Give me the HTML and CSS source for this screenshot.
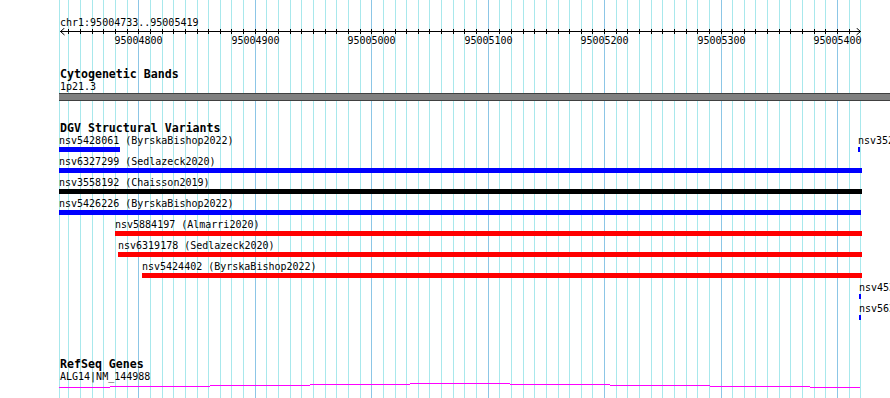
FILE: index.html
```html
<!DOCTYPE html>
<html lang="en">
<head>
    <meta charset="UTF-8">
    <title>chr1:95004733..95005419</title>
    <link rel="stylesheet" href="styles.css">
</head>
<body>

<div class="view">
    <!--背景网格-->
    <svg class="grid" id="grid" width="890" height="398"></svg>

    <!--标尺-->
    <div class="ruler">
        <div class="loc">chr1:95004733..95005419</div>
        <svg class="scale" id="scale" width="890" height="20"></svg>
    </div>

    <!--细胞遗传带-->
    <div class="track cyto">
        <h3 class="track-name">Cytogenetic Bands</h3>
        <div class="feature-label">1p21.3</div>
        <div class="band"></div>
    </div>

    <!--结构变异-->
    <div class="track dgv">
        <h3 class="track-name">DGV Structural Variants</h3>
        <div class="rows">
            <div class="row">
                <div class="sv blue" style="left:59px;width:61px">
                    <span class="sv-name">nsv5428061 (ByrskaBishop2022)</span><i class="sv-bar"></i>
                </div>
                <div class="sv blue" style="left:858px;width:2px">
                    <span class="sv-name">nsv3524421 (Chaisson2019)</span><i class="sv-bar"></i>
                </div>
            </div>
            <div class="row">
                <div class="sv blue" style="left:59px;width:803px">
                    <span class="sv-name">nsv6327299 (Sedlazeck2020)</span><i class="sv-bar"></i>
                </div>
            </div>
            <div class="row">
                <div class="sv black" style="left:59px;width:803px">
                    <span class="sv-name">nsv3558192 (Chaisson2019)</span><i class="sv-bar"></i>
                </div>
            </div>
            <div class="row">
                <div class="sv blue" style="left:59px;width:802px">
                    <span class="sv-name">nsv5426226 (ByrskaBishop2022)</span><i class="sv-bar"></i>
                </div>
            </div>
            <div class="row">
                <div class="sv red" style="left:115px;width:747px">
                    <span class="sv-name">nsv5884197 (Almarri2020)</span><i class="sv-bar"></i>
                </div>
            </div>
            <div class="row">
                <div class="sv red" style="left:118px;width:744px">
                    <span class="sv-name">nsv6319178 (Sedlazeck2020)</span><i class="sv-bar"></i>
                </div>
            </div>
            <div class="row">
                <div class="sv red" style="left:142px;width:720px">
                    <span class="sv-name">nsv5424402 (ByrskaBishop2022)</span><i class="sv-bar"></i>
                </div>
            </div>
            <div class="row">
                <div class="sv blue" style="left:859px;width:2px">
                    <span class="sv-name">nsv4531210 (ByrskaBishop2022)</span><i class="sv-bar"></i>
                </div>
            </div>
            <div class="row">
                <div class="sv blue" style="left:859px;width:2px">
                    <span class="sv-name">nsv5631904 (Sedlazeck2020)</span><i class="sv-bar"></i>
                </div>
            </div>
        </div>
    </div>

    <!--基因-->
    <div class="track refseq">
        <h3 class="track-name">RefSeq Genes</h3>
        <div class="feature-label">ALG14|NM_144988</div>
        <svg class="gene" width="890" height="8">
            <g fill="#ff00ff">
                <rect x="59" y="5" width="51" height="1"/>
                <rect x="110" y="4" width="100" height="1"/>
                <rect x="210" y="3" width="100" height="1"/>
                <rect x="310" y="2" width="100" height="1"/>
                <rect x="410" y="1" width="100" height="1"/>
                <rect x="510" y="2" width="100" height="1"/>
                <rect x="610" y="3" width="100" height="1"/>
                <rect x="710" y="4" width="100" height="1"/>
                <rect x="810" y="5" width="50" height="1"/>
            </g>
        </svg>
    </div>
</div>

<script>
    (function () {
        var NS = 'http://www.w3.org/2000/svg';
        var start = 95004733, x0 = 60.3, scale = 800 / 687;

        // 碱基位置 -> 像素
        function toX(bp) {
            return Math.round(x0 + (bp - start) * scale) + 0.5;
        }

        function el(name, attrs) {
            var node = document.createElementNS(NS, name);
            for (var k in attrs) node.setAttribute(k, attrs[k]);
            return node;
        }

        var grid = document.getElementById('grid');
        var ruler = document.getElementById('scale');

        // 1. 网格线
        grid.appendChild(el('line', {x1: 59.5, x2: 59.5, y1: 0, y2: 398, 'class': 'minor'}));
        for (var bp = 95004740; bp <= 95005420; bp += 10) {
            var x = toX(bp);
            grid.appendChild(el('line', {x1: x, x2: x, y1: 0, y2: 398, 'class': bp % 100 === 0 ? 'major' : 'minor'}));
        }

        // 2. 标尺
        ruler.appendChild(el('line', {x1: 60, x2: 861, y1: 3.5, y2: 3.5, 'class': 'axis'}));
        ruler.appendChild(el('path', {d: 'M64.5,0 L60.5,3.5 L64.5,7', 'class': 'axis'}));
        ruler.appendChild(el('path', {d: 'M856.5,0 L860.5,3.5 L856.5,7', 'class': 'axis'}));
        for (var b = 95004740; b <= 95005410; b += 10) {
            var tx = toX(b);
            ruler.appendChild(el('line', {x1: tx, x2: tx, y1: 1, y2: 6, 'class': 'axis'}));
            if (b % 100 === 0) {
                var t = el('text', {x: tx, y: 16, 'class': 'tick-label'});
                t.textContent = b;
                ruler.appendChild(t);
            }
        }
    })();
</script>
</body>
</html>
```

FILE: styles.css
```css
* {
    margin: 0;
    padding: 0;
    box-sizing: border-box;
}

body {
    font-family: "DejaVu Sans Mono", "Liberation Mono", monospace;
    font-size: 10px;
    color: #000;
    background-color: #fff;
}

.view {
    position: relative;
    z-index: 0;
    width: 890px;
    height: 398px;
    overflow: hidden;
}

/*背景网格*/
.grid {
    position: absolute;
    left: 0;
    top: 0;
    z-index: -1;
}

.grid .minor {
    stroke: #a8e8ec;
    stroke-width: 1;
}

.grid .major {
    stroke: #8cc6e6;
    stroke-width: 1;
}

/*标尺*/
.ruler {
    padding-top: 16px;
}

.loc {
    padding: 1px 0 0 60px;
    height: 12px;
    line-height: 11px;
}

.scale {
    display: block;
}

.scale .axis {
    stroke: #000;
    stroke-width: 1;
    fill: none;
}

.tick-label {
    font-family: "DejaVu Sans Mono", monospace;
    font-size: 10px;
    text-anchor: middle;
    fill: #000;
}

/*轨道*/
.track-name {
    padding: 1px 0 0 60px;
    height: 13px;
    font-size: 11.6px;
    font-weight: bold;
    line-height: 12px;
}

.feature-label {
    padding: 1px 0 0 60px;
    height: 12px;
    line-height: 11px;
    white-space: nowrap;
}

.cyto {
    margin-top: 19px;
}

.band {
    margin: 1px 0 0 59px;
    height: 8px;
    border-top: 1px solid #404040;
    border-bottom: 1px solid #404040;
    background-color: #808080;
}

.dgv {
    margin-top: 20px;
}

.row {
    position: relative;
    height: 21px;
}

.sv {
    position: absolute;
    top: 0;
    height: 18px;
}

.sv-name {
    display: block;
    padding-top: 1px;
    height: 13px;
    line-height: 12px;
    white-space: nowrap;
}

.sv-bar {
    display: block;
    height: 5px;
}

.blue .sv-bar {
    background-color: #0000ff;
}

.red .sv-bar {
    background-color: #ff0000;
}

.black .sv-bar {
    background-color: #000;
}

.refseq {
    margin-top: 34px;
}

.gene {
    display: block;
}
```
